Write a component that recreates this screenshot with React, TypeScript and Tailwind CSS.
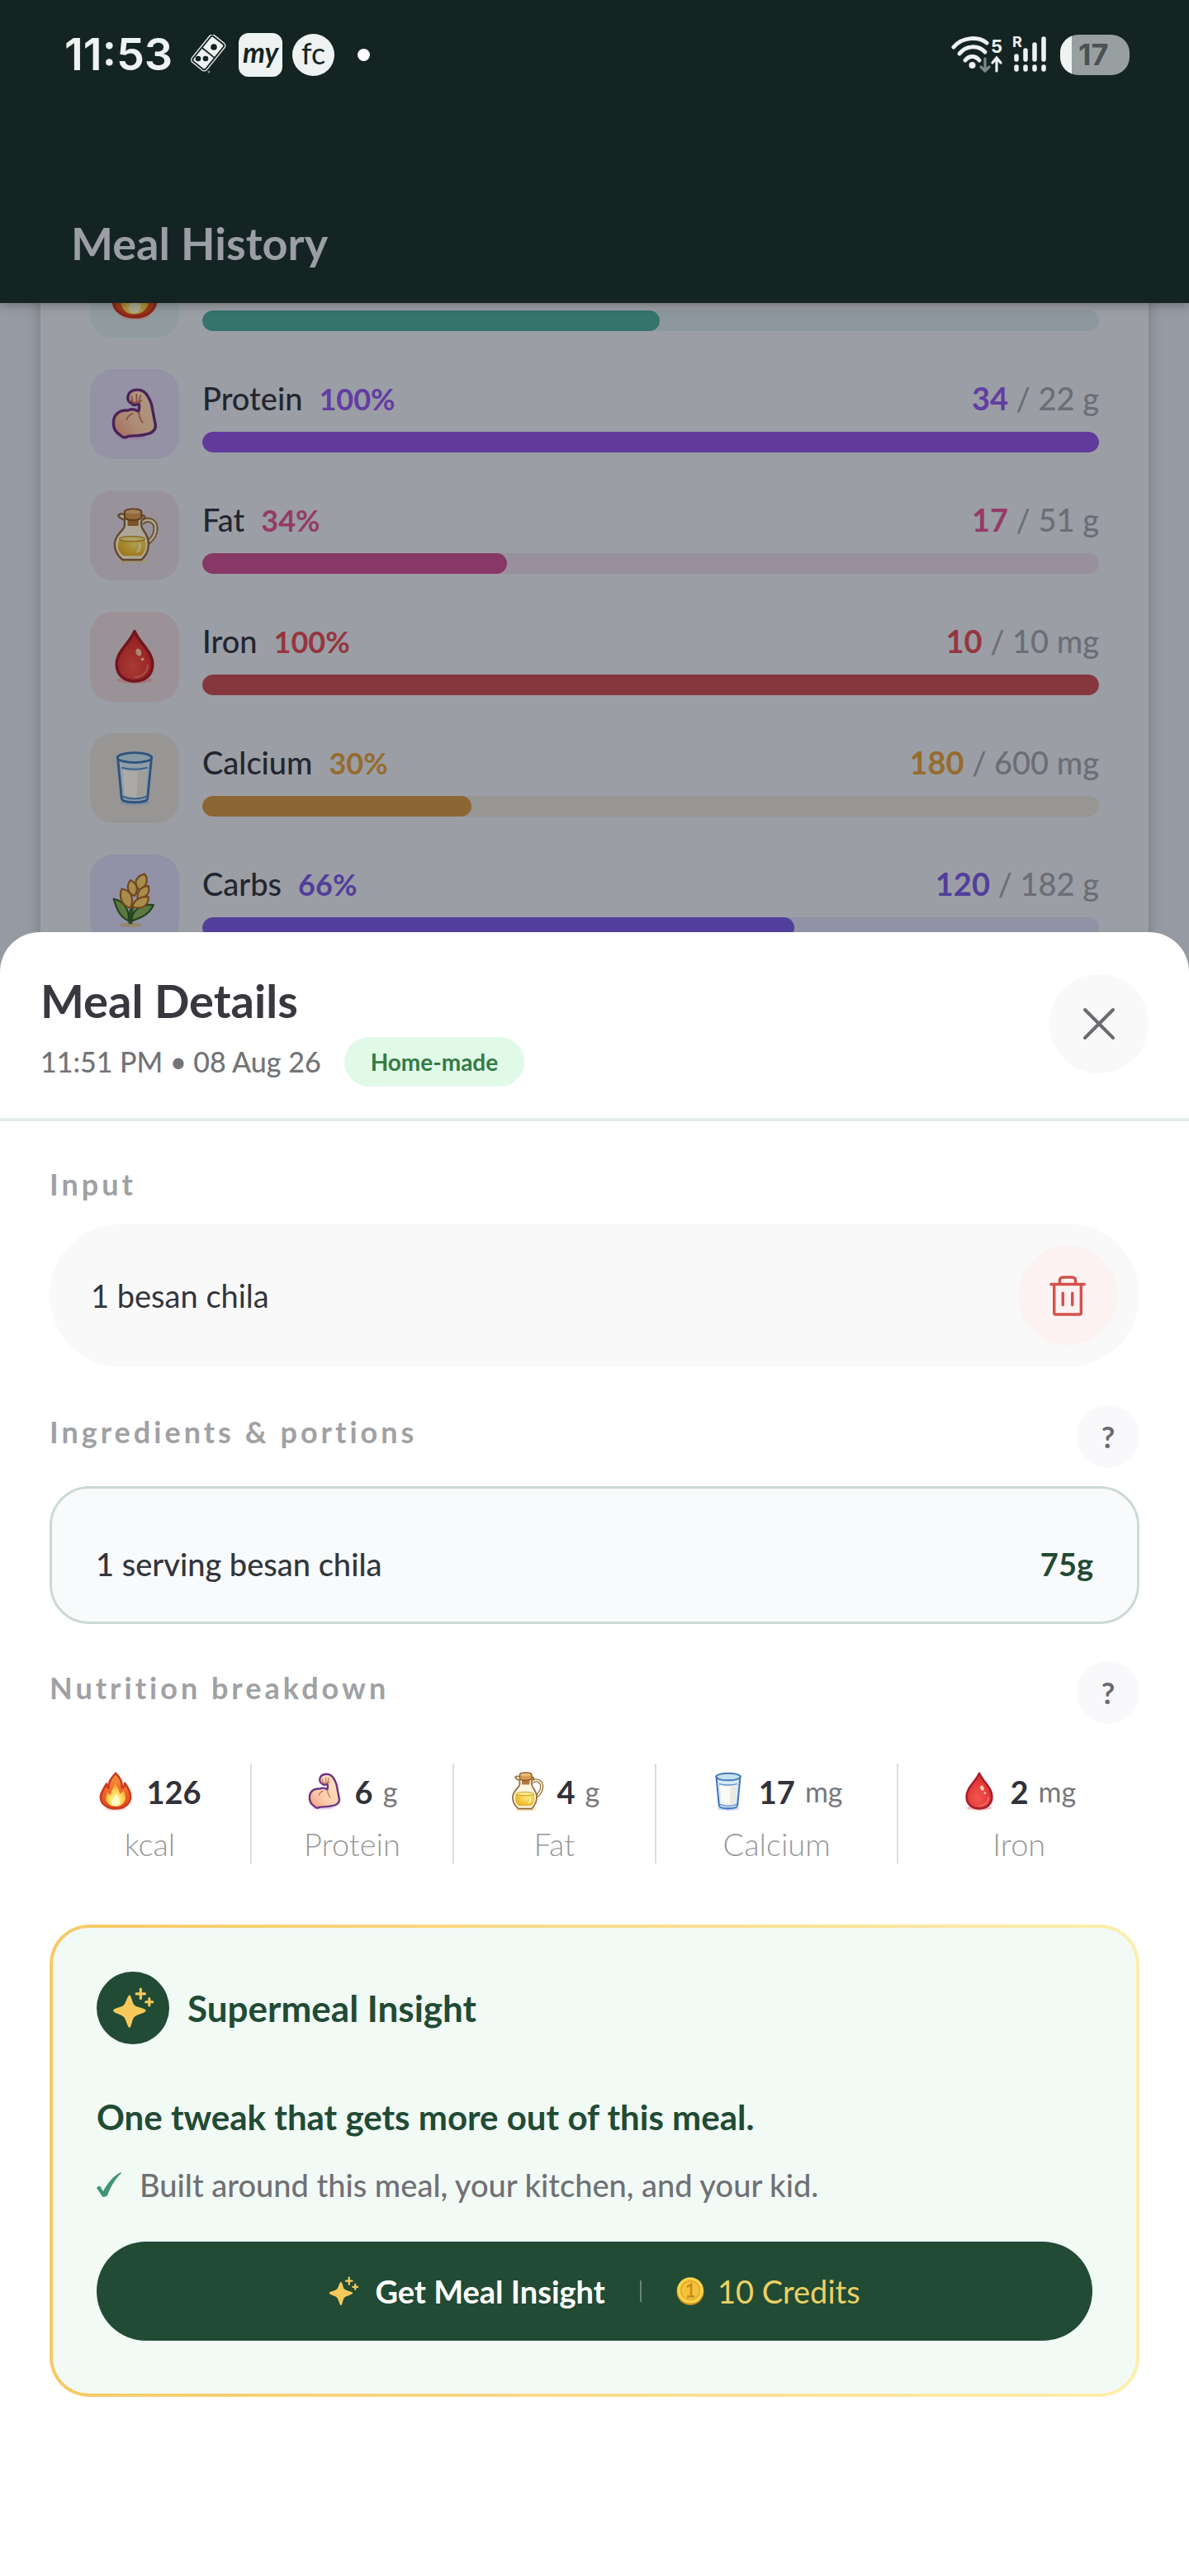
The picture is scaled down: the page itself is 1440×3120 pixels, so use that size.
// src/App.tsx
import React, { useState } from "react";

type IconProps = { className?: string };

const FlameIcon: React.FC<IconProps> = ({ className }) => (
  <svg viewBox="0 0 48 56" className={className} aria-hidden="true">
    <defs>
      <linearGradient id="flameOuter" x1="0" y1="0" x2="0" y2="1">
        <stop offset="0" stopColor="#f79a3c" />
        <stop offset="0.5" stopColor="#f0692b" />
        <stop offset="1" stopColor="#e2441f" />
      </linearGradient>
      <radialGradient id="flameInner" cx="0.5" cy="0.75" r="0.6">
        <stop offset="0" stopColor="#fff7a8" />
        <stop offset="0.6" stopColor="#fed552" />
        <stop offset="1" stopColor="#fb9f34" />
      </radialGradient>
    </defs>
    <ellipse cx="24" cy="52" rx="15" ry="3" fill="#f7b8b8" opacity="0.6" />
    <path
      d="M24 2c6 6 10 13 9 21 2-1 4-4 4-7 6 8 9 15 8 22-2 9-10 14-21 14S4 46 3 38c-1-6 3-12 8-21 0 3 1 5 3 6-1-8 4-14 10-21z"
      fill="url(#flameOuter)"
      stroke="#c93b22"
      strokeWidth="3"
      strokeLinejoin="round"
    />
    <path
      d="M24 13c0 6 5 11 6 18 2-1 4-2 5-5 4 9 4 14 0 18-3 4-7 5-11 5s-9-1-12-6c-3-4-2-9 1-14 1 2 2 3 4 4 0-8 7-12 7-20z"
      fill="url(#flameInner)"
    />
    <path d="M25 31c1 4 5 6 5 11 0 4-3 6-6 6s-7-2-6-6c0-3 3-3 3-6 2 0 3-2 4-5z" fill="#fffbc9" />
  </svg>
);

const ArmIcon: React.FC<IconProps> = ({ className }) => (
  <svg viewBox="0 0 48 56" className={className} aria-hidden="true">
    <defs>
      <linearGradient id="armSkin" x1="1" y1="0" x2="0" y2="1">
        <stop offset="0" stopColor="#ffe3c8" />
        <stop offset="0.6" stopColor="#fdcfae" />
        <stop offset="1" stopColor="#f39a80" />
      </linearGradient>
    </defs>
    <ellipse cx="22" cy="51" rx="15" ry="2.5" fill="#e0b4ea" opacity="0.6" />
    <path
      d="M18 8c2-5 10-6 15-3 4 3 6 7 8 13l4 21c0 5-4 8-10 9-7 2-14 1-18 2-3 2-5 1-7-1-5-3-8-8-7-15 1-7 7-11 14-10 4-2 8-1 11 1 1-4 1-6 0-8-3 2-5 2-7 0-3-1-5-5-3-9z"
      fill="url(#armSkin)"
      stroke="#6d3283"
      strokeWidth="2.8"
      strokeLinejoin="round"
    />
    <path
      d="M28 26c1 5 2 8 4 10M22 27c-3 1-5 3-6 6M21 10l1 6M26 8l0 7M30 9l-2 7M19 14c5 3 9 3 12 0"
      fill="none"
      stroke="#c9755f"
      strokeWidth="1.5"
      strokeLinecap="round"
    />
  </svg>
);

const OilIcon: React.FC<IconProps> = ({ className }) => (
  <svg viewBox="0 0 48 56" className={className} aria-hidden="true">
    <defs>
      <radialGradient id="oilFill" cx="0.6" cy="0.4" r="0.7">
        <stop offset="0" stopColor="#ffe873" />
        <stop offset="1" stopColor="#e9ac1f" />
      </radialGradient>
    </defs>
    <ellipse cx="23" cy="53" rx="15" ry="2.4" fill="#f5d69c" opacity="0.7" />
    <path d="M31 15c5-5 13-3 14 4 1 8-4 13-8 16" fill="none" stroke="#9a7440" strokeWidth="5" />
    <path d="M31 15c5-5 13-3 14 4 1 8-4 13-8 16" fill="none" stroke="#fbf3dc" strokeWidth="2" />
    <path
      d="M14 12c-4-1-7-4-6-5 3-2 5-1 8 1h15c3-1 4 1 2 3-2 1-3 3-2 7 0 4 7 8 7 18 0 8-3 12-7 16H12c-5-4-8-9-8-16 0-9 9-13 10-18z"
      fill="#fdf6df"
      stroke="#8e6b3c"
      strokeWidth="2"
      strokeLinejoin="round"
    />
    <path d="M9 31c7-3 18-3 25 0 2 8 1 13-4 17H13C7 44 6 38 9 31z" fill="url(#oilFill)" />
    <ellipse cx="21.5" cy="31" rx="12.5" ry="2.5" fill="#fdea8b" stroke="#c7922b" strokeWidth="1" />
    <rect x="17" y="11" width="11" height="7" rx="1" fill="#b5793c" />
    <path d="M14 4c0-4 17-4 17 0v6c-3 3-14 3-17 0z" fill="#d79b55" stroke="#8a5a28" strokeWidth="1.6" />
    <ellipse cx="22.5" cy="4" rx="7.5" ry="2" fill="#e9bd80" />
    <path d="M29 36c1 4 0 6-2 8" fill="none" stroke="#fff7bd" strokeWidth="2" strokeLinecap="round" />
  </svg>
);

const GlassIcon: React.FC<IconProps> = ({ className }) => (
  <svg viewBox="0 0 48 56" className={className} aria-hidden="true">
    <ellipse cx="24" cy="52" rx="15" ry="2.8" fill="#a9c9f5" opacity="0.7" />
    <path
      d="M7 6l4 42c1 5 25 5 26 0l4-42z"
      fill="#d4e9f8"
      stroke="#4678b8"
      strokeWidth="2.4"
      strokeLinejoin="round"
    />
    <path d="M12 19c8 2 16 2 24 0l-2 26c-6 2-14 2-20 0z" fill="#fcfaf4" />
    <path d="M27 20h9l-2 25c-3 1-6 1-8 1z" fill="#ece9e0" />
    <path d="M11 17c8 2 18 2 26 0M12 46c7 3 17 3 24 0" fill="none" stroke="#5c8fca" strokeWidth="1.6" />
    <ellipse cx="24" cy="7" rx="17" ry="5" fill="#c3e1ee" stroke="#4678b8" strokeWidth="2.2" />
  </svg>
);

const DropIcon: React.FC<IconProps> = ({ className }) => (
  <svg viewBox="0 0 48 56" className={className} aria-hidden="true">
    <defs>
      <radialGradient id="dropFill" cx="0.45" cy="0.7" r="0.6">
        <stop offset="0" stopColor="#f4564d" />
        <stop offset="1" stopColor="#dd2f33" />
      </radialGradient>
    </defs>
    <ellipse cx="24" cy="51" rx="18" ry="3.4" fill="#f2a3ab" opacity="0.7" />
    <path
      d="M24 2c5 12 18 20 18 33 0 11-8 17-18 17S6 46 6 35C6 22 19 14 24 2z"
      fill="url(#dropFill)"
      stroke="#a81f2c"
      strokeWidth="3"
      strokeLinejoin="round"
    />
    <ellipse cx="28" cy="23" rx="2.6" ry="3.8" fill="#fbc9b0" transform="rotate(-20 28 23)" />
    <circle cx="32" cy="30" r="1.6" fill="#fbc9b0" />
    <path d="M37 36c0 7-5 11-12 12" fill="none" stroke="#f77f76" strokeWidth="1.4" strokeLinecap="round" />
  </svg>
);

const WheatIcon: React.FC<IconProps> = ({ className }) => (
  <svg viewBox="0 0 48 56" className={className} aria-hidden="true">
    <ellipse cx="20" cy="53" rx="11" ry="2" fill="#d8c07a" opacity="0.8" />
    <path d="M20 52c-1-9 0-14 3-20" fill="none" stroke="#3f6a32" strokeWidth="4" />
    <g fill="#86b45c" stroke="#35602f" strokeWidth="1.8" strokeLinejoin="round">
      <path d="M18 49C9 45 6 37 3 27c10 2 16 10 15 22z" />
      <path d="M21 49c0-10 8-17 22-16-4 9-12 13-22 16z" />
    </g>
    <g fill="#f6cf6e" stroke="#a9672c" strokeWidth="1.8" strokeLinejoin="round">
      <path d="M34 2c4 5 3 12-5 16-7-6-4-14 5-16z" />
      <path d="M20 8c7 4 8 10 4 16-7-2-9-10-4-16z" />
      <path d="M38 14c2 8-3 12-11 13-1-8 4-13 11-13z" />
      <path d="M11 17c9 1 13 9 9 19-9-2-12-11-9-19z" />
      <path d="M38 25c0 9-7 13-16 10 1-7 8-11 16-10z" />
    </g>
  </svg>
);

const SparklesIcon: React.FC<IconProps> = ({ className }) => (
  <svg viewBox="0 0 48 48" className={className} fill="#f6c95c" aria-hidden="true">
    <path d="M20 9c2 0 3 8 5 11 3 4 14 4 14 7s-11 4-14 8c-2 3-3 12-5 12s-4-9-6-12c-3-4-13-5-13-8s10-3 13-7c2-3 4-11 6-11z" />
    <g stroke="#f6c95c" strokeWidth="3" strokeLinecap="round">
      <path d="M33 2v11M28 7.5h10" />
      <path d="M43 13v8M39 17h8" />
    </g>
  </svg>
);

const CoinIcon: React.FC<IconProps> = ({ className }) => (
  <svg viewBox="0 0 34 34" className={className} aria-hidden="true">
    <circle cx="17" cy="17.5" r="16.5" fill="#c98f1f" />
    <circle cx="17" cy="16" r="15.8" fill="#fbd34b" />
    <circle cx="17" cy="16" r="11.5" fill="#f5c13a" stroke="#e3a828" strokeWidth="1.5" />
    <path d="M13 12l5-3v14M13 23.5h9" fill="none" stroke="#c58a20" strokeWidth="2.6" />
  </svg>
);

const TrashIcon: React.FC<IconProps> = ({ className }) => (
  <svg
    viewBox="0 0 48 52"
    className={className}
    fill="none"
    stroke="#d2524d"
    strokeWidth="3.6"
    strokeLinecap="round"
    strokeLinejoin="round"
    aria-hidden="true"
  >
    <path d="M3 12h42M7 12v36a2 2 0 0 0 2 2h30a2 2 0 0 0 2-2V12" />
    <path d="M14 11V7a4 4 0 0 1 4-4h12a4 4 0 0 1 4 4v4M18 23v15M30 23v15" />
  </svg>
);

const DominoIcon: React.FC<IconProps> = ({ className }) => (
  <svg viewBox="0 0 48 48" className={className} aria-hidden="true">
    <g transform="rotate(39 23 23)">
      <rect x="11" y="1" width="23" height="42" rx="4" fill="none" stroke="#eef2f1" strokeWidth="1.4" />
      <rect x="13.5" y="3.5" width="18" height="37" rx="2" fill="#eef2f1" />
      <path d="M13 22h19" stroke="#142422" strokeWidth="1.8" />
    </g>
    <circle cx="30" cy="15" r="3.8" fill="#142422" />
    <circle cx="11" cy="29" r="3.3" fill="#142422" />
    <circle cx="20" cy="29" r="3.3" fill="#142422" />
    <circle cx="24" cy="45" r="1.5" fill="#7f8b89" />
  </svg>
);

const WifiIcon: React.FC<IconProps> = ({ className }) => (
  <svg viewBox="0 0 48 46" className={className} fill="none" strokeLinecap="round" aria-hidden="true">
    <g stroke="#eef2f1" strokeWidth="5">
      <path d="M3 14C14 1 34 1 43 9" />
      <path d="M10 22c8-10 22-11 31-2" />
      <path d="M17 30c5-6 12-6 17 0" />
    </g>
    <circle cx="25.5" cy="36" r="4" fill="#eef2f1" />
    <path d="M41 28v15M36 38l5 5 5-5" stroke="#7d8785" strokeWidth="3.2" />
  </svg>
);

const UpArrowIcon: React.FC<IconProps> = ({ className }) => (
  <svg
    viewBox="0 0 14 20"
    className={className}
    fill="none"
    stroke="#eef2f1"
    strokeWidth="3.2"
    strokeLinecap="round"
    aria-hidden="true"
  >
    <path d="M7 18V3M2 8l5-6 5 6" />
  </svg>
);

const SignalIcon: React.FC<IconProps> = ({ className }) => (
  <svg viewBox="0 0 42 46" className={className} aria-hidden="true">
    <g stroke="#eef2f1" strokeWidth="5.5" strokeLinecap="round">
      <path d="M5 25v4M16 18v11M27 11v18M38 4v25" />
      <path d="M5 38v3M16 38v3M27 38v3M38 38v3" />
    </g>
  </svg>
);

interface Goal {
  name?: string;
  percent: number;
  value?: string;
  target?: string;
  icon: React.FC<IconProps>;
  text: string;
  fill: string;
  track: string;
  tile: string;
}

const goals: Goal[] = [
  {
    percent: 51,
    icon: FlameIcon,
    text: "text-[#35736d]",
    fill: "bg-[#35736d]",
    track: "bg-[#8c989d]",
    tile: "bg-[#8f9b9f]",
  },
  {
    name: "Protein",
    percent: 100,
    value: "34",
    target: "22 g",
    icon: ArmIcon,
    text: "text-[#623da2]",
    fill: "bg-[#623a9b]",
    track: "bg-[#9592a6]",
    tile: "bg-[#9592a6]",
  },
  {
    name: "Fat",
    percent: 34,
    value: "17",
    target: "51 g",
    icon: OilIcon,
    text: "text-[#953b68]",
    fill: "bg-[#873866]",
    track: "bg-[#98919d]",
    tile: "bg-[#98929c]",
  },
  {
    name: "Iron",
    percent: 100,
    value: "10",
    target: "10 mg",
    icon: DropIcon,
    text: "text-[#95363f]",
    fill: "bg-[#86373e]",
    track: "bg-[#9a9296]",
    tile: "bg-[#9a9297]",
  },
  {
    name: "Calcium",
    percent: 30,
    value: "180",
    target: "600 mg",
    icon: GlassIcon,
    text: "text-[#966c2e]",
    fill: "bg-[#8b6632]",
    track: "bg-[#979692]",
    tile: "bg-[#989695]",
  },
  {
    name: "Carbs",
    percent: 66,
    value: "120",
    target: "182 g",
    icon: WheatIcon,
    text: "text-[#523e9b]",
    fill: "bg-[#523e9b]",
    track: "bg-[#9192a5]",
    tile: "bg-[#9192a5]",
  },
];

const nutrients = [
  { label: "kcal", value: "126", unit: "", icon: FlameIcon, grow: "flex-[5]" },
  { label: "Protein", value: "6", unit: "g", icon: ArmIcon, grow: "flex-[5]" },
  { label: "Fat", value: "4", unit: "g", icon: OilIcon, grow: "flex-[5]" },
  { label: "Calcium", value: "17", unit: "mg", icon: GlassIcon, grow: "flex-[6]" },
  { label: "Iron", value: "2", unit: "mg", icon: DropIcon, grow: "flex-[6]" },
];

const StatusBar: React.FC = () => (
  <div className="flex h-[132px] items-center justify-between pr-[72px] pl-[78px] text-[#eef2f1]">
    <div className="flex items-center">
      <span className="font-[Inter] text-[54px] leading-[64px] font-semibold">11:53</span>
      <DominoIcon className="ml-5 size-12" />
      <span className="ml-3 flex size-[53px] items-center justify-center rounded-xl bg-[#eef2f1] pb-2 text-[34px] leading-[45px] font-bold text-[#142422] italic">
        my
      </span>
      <span className="ml-3 flex size-[51px] items-center justify-center rounded-full bg-[#eef2f1] pb-1 text-[36px] leading-[47px] text-[#142422]">
        fc
      </span>
      <span className="ml-7 size-[15px] rounded-full bg-white" />
    </div>
    <div className="flex items-center">
      <WifiIcon className="h-[46px] w-12" />
      <span className="flex flex-col items-center font-[Inter] text-[22px] leading-6 font-bold">
        5
        <UpArrowIcon className="h-5 w-[14px]" />
      </span>
      <span className="relative ml-3">
        <SignalIcon className="h-[46px] w-[42px]" />
        <span className="absolute -top-1 left-0 font-[Inter] text-[18px] leading-6 font-bold">R</span>
      </span>
      <span className="ml-4 flex h-[49px] w-[84px] overflow-hidden rounded-[22px] bg-[#989fa0]">
        <span className="w-[14px] bg-[#eef2f1]" />
        <span className="flex-1 pl-2 font-[Inter] text-[36px] leading-[49px] font-bold text-[#4b5154]">
          17
        </span>
      </span>
    </div>
  </div>
);

const GoalRow: React.FC<{ goal: Goal }> = ({ goal }) => {
  const Icon = goal.icon;
  return (
    <li className="flex gap-7">
      <div className={`flex h-[109px] w-[108px] items-center justify-center rounded-[28px] ${goal.tile}`}>
        <Icon className="h-[68px] w-[58px] brightness-[.68]" />
      </div>
      <div className="flex flex-1 flex-col justify-end gap-4 pb-2">
        {goal.name && (
          <div className="flex justify-between text-[38px] leading-[48px] font-medium">
            <p className="flex items-baseline gap-5 text-[#23262f]">
              {goal.name}
              <span className={`text-[36px] font-bold ${goal.text}`}>{goal.percent}%</span>
            </p>
            <p className="text-[#6b6e76]">
              <span className={`font-bold ${goal.text}`}>{goal.value}</span> / {goal.target}
            </p>
          </div>
        )}
        <div className={`h-[25px] overflow-hidden rounded-full ${goal.track}`}>
          <div className={`h-full rounded-full ${goal.fill}`} style={{ width: `${goal.percent}%` }} />
        </div>
      </div>
    </li>
  );
};

const SectionTitle: React.FC<{ children: React.ReactNode; help: string }> = ({ children, help }) => (
  <div className="flex items-start justify-between">
    <h3 className="pt-2 text-[36px] leading-[48px] font-bold tracking-[4px] text-[#a0a1a3]">{children}</h3>
    <button
      type="button"
      aria-label={help}
      className="size-[76px] rounded-full bg-[#f9f9fb] text-[36px] leading-[48px] font-bold text-[#6a6a70]"
    >
      ?
    </button>
  </div>
);

const App: React.FC = () => {
  const [meal, setMeal] = useState("1 besan chila");

  return (
    <div className="flex min-h-screen flex-col bg-[#969aa2] font-[Lato,sans-serif]">
      <header className="relative z-10 bg-[#142422] pb-10 shadow-[0_2px_12px_rgba(0,0,0,0.3)]">
        <StatusBar />
        <h1 className="mt-[131px] px-[86px] text-[54px] leading-[64px] font-bold text-[#9b9ea5]">
          Meal History
        </h1>
      </header>

      {/* goals list, scrolled partly under the header */}
      <section className="overflow-hidden px-[49px]">
        <ul className="-mt-[67px] flex flex-col gap-[38px] bg-[#9b9ea5] px-[60px] pb-[33px] shadow-[0_0_16px_rgba(0,0,0,0.22)]">
          {goals.map((goal, index) => (
            <GoalRow key={index} goal={goal} />
          ))}
        </ul>
      </section>

      <main className="relative z-10 -mt-12 flex-1 rounded-t-[48px] bg-white pb-24">
        <div className="flex items-start justify-between border-b-4 border-[#e3ede9] px-[49px] pt-[51px] pb-[38px]">
          <div>
            <h2 className="text-[56px] leading-[64px] font-bold text-[#38383f]">Meal Details</h2>
            <div className="mt-3 flex items-center gap-7">
              <p className="text-[34px] leading-[48px] font-medium text-[#737477]">11:51 PM • 08 Aug 26</p>
              <span className="rounded-full bg-[#e1fae8] px-8 text-[28px] leading-[60px] font-bold text-[#357a44]">
                Home-made
              </span>
            </div>
          </div>
          <button
            type="button"
            aria-label="Close"
            className="flex size-[120px] items-center justify-center rounded-full bg-[#f9f9fa]"
          >
            <svg viewBox="0 0 40 40" className="size-10" stroke="#6a6a6f" strokeWidth="4" strokeLinecap="round">
              <path d="M3 3l34 34M37 3L3 37" />
            </svg>
          </button>
        </div>

        <div className="px-[60px]">
          <label
            htmlFor="meal"
            className="mt-[52px] block text-[36px] leading-[48px] font-bold tracking-[4px] text-[#a0a1a3]"
          >
            Input
          </label>
          <div className="mt-6 flex h-[174px] items-center rounded-full bg-[#f9f9fa] pr-[27px] pl-[50px]">
            <input
              id="meal"
              type="text"
              value={meal}
              onChange={(e) => setMeal(e.target.value)}
              className="min-w-0 flex-1 bg-transparent text-[38px] leading-[48px] text-[#32363c] outline-none"
            />
            <button
              type="button"
              aria-label="Delete meal"
              onClick={() => setMeal("")}
              className="flex size-[120px] items-center justify-center rounded-full bg-[#fcf2f1]"
            >
              <TrashIcon className="h-[50px] w-[46px]" />
            </button>
          </div>

          <div className="mt-[46px]">
            <SectionTitle help="About ingredients and portions">Ingredients &amp; portions</SectionTitle>
          </div>
          <div className="mt-[22px] flex justify-between rounded-[48px] border-[3px] border-[#cbdad3] bg-[#f9fafb] px-[53px] pt-[67px] pb-[46px] text-[38px] leading-[48px]">
            <span className="font-medium text-[#32363c]">1 serving besan chila</span>
            <span className="font-bold text-[#214a34]">75g</span>
          </div>

          <div className="mt-[45px]">
            <SectionTitle help="About the nutrition breakdown">Nutrition breakdown</SectionTitle>
          </div>
          <dl className="mt-12 flex">
            {nutrients.map(({ label, value, unit, icon: Icon, grow }) => (
              <div
                key={label}
                className={`flex flex-col-reverse items-center gap-[15px] border-l-2 border-[#dddddf] pt-[10px] first:border-l-0 ${grow}`}
              >
                <dt className="text-[38px] leading-[48px] font-light text-[#97989b]">{label}</dt>
                <dd className="flex items-center text-[38px] leading-[48px] font-bold text-[#32323a]">
                  <Icon className="mr-4 h-12 w-[42px]" />
                  {value}
                  {unit && <span className="ml-3 text-[34px] font-normal text-[#77787b]">{unit}</span>}
                </dd>
              </div>
            ))}
          </dl>

          <section className="mt-[74px] rounded-[48px] bg-linear-to-r from-[#f5ca66] to-[#fdeeae] p-1">
            <div className="rounded-[44px] bg-[#f2faf6] px-[53px] pt-[53px] pb-16">
              <div className="flex items-center gap-[22px]">
                <span className="flex size-[88px] items-center justify-center rounded-full bg-[#214b34]">
                  <SparklesIcon className="size-[50px]" />
                </span>
                <h3 className="text-[44px] leading-[48px] font-bold text-[#214b34]">Supermeal Insight</h3>
              </div>
              <p className="mt-16 text-[42px] leading-[48px] font-bold text-[#214b34]">
                One tweak that gets more out of this meal.
              </p>
              <p className="mt-[34px] flex items-center gap-[22px] text-[38px] leading-[48px] font-medium text-[#707174]">
                <svg viewBox="0 0 30 30" className="size-[30px]" fill="#3f9670" aria-hidden="true">
                  <path d="M0 19c2-3 5-3 6 1l2 3C13 13 20 5 29 0l1 1c-9 9-13 17-17 27-2 2-6 3-7 0z" />
                </svg>
                Built around this meal, your kitchen, and your kid.
              </p>
              <button
                type="button"
                className="mt-[45px] flex h-[120px] w-full items-center justify-center rounded-full bg-[#214b34] text-[38px] leading-[48px] text-white"
              >
                <SparklesIcon className="mr-5 size-9" />
                <span className="font-bold">Get Meal Insight</span>
                <span className="mx-[42px] h-[26px] w-[2px] bg-[#688471]" />
                <CoinIcon className="mr-4 size-[34px]" />
                <span className="text-[#ecd064]">10 Credits</span>
              </button>
            </div>
          </section>
        </div>
      </main>
    </div>
  );
};

export default App;
